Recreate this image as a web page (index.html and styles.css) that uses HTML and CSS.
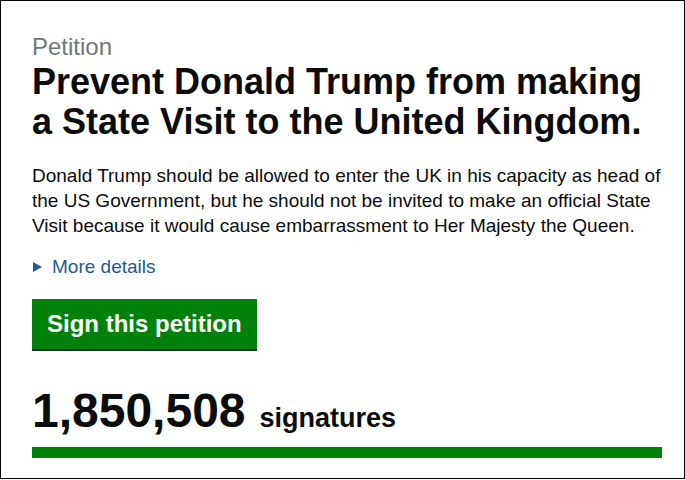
FILE: index.html
```html
<!DOCTYPE html>
<html lang="en">
<head>
<meta charset="utf-8">
<title>Petition</title>
<link rel="stylesheet" href="styles.css">
</head>
<body>
<div class="frame">
  <div class="content">
    <p class="kicker">Petition</p>
    <h1 class="title">Prevent Donald Trump from making a State Visit to the United Kingdom.</h1>
    <p class="body-text">Donald Trump should be allowed to enter the UK in his capacity as head of the US Government, but he should not be invited to make an official State Visit because it would cause embarrassment to Her Majesty the Queen.</p>
    <div class="details"><span class="arrow"></span><span class="details-link">More details</span></div>
    <div class="button-row"><span class="button">Sign this petition</span></div>
    <div class="count"><span class="count-number">1,850,508</span><span class="count-text">signatures</span></div>
    <div class="bar"></div>
  </div>
</div>
</body>
</html>
```

FILE: styles.css
```css
* { box-sizing: border-box; }
html, body { margin: 0; padding: 0; background: #fff; }
body { font-family: "Liberation Sans", Arial, sans-serif; color: #0b0c0c; }
.frame {
  width: 685px;
  height: 479px;
  border: 1px solid #000;
  padding: 31px 0 0 31px;
  overflow: hidden;
}
.content { width: 630px; }
.kicker {
  margin: 0;
  font-size: 24px;
  line-height: 30px;
  color: #6f777b;
}
.title {
  margin: 0;
  font-size: 36px;
  line-height: 40px;
  font-weight: 700;
}
.body-text {
  margin: 21px 0 0;
  font-size: 19px;
  line-height: 25px;
}
.details {
  margin-top: 16px;
  display: flex;
  align-items: center;
  gap: 10px;
  font-size: 19px;
  line-height: 25px;
}
.arrow {
  width: 0;
  height: 0;
  margin-left: 1px;
  border-left: 9px solid #1d5b8f;
  border-top: 5.5px solid transparent;
  border-bottom: 5.5px solid transparent;
}
.details-link { color: #1d5b8f; }
.button-row { margin-top: 20px; display: flex; }
.button {
  display: inline-block;
  background: #00820a;
  color: #fff;
  font-size: 24px;
  line-height: 30px;
  font-weight: 700;
  padding: 10px 15px;
  box-shadow: 0 2px 0 #003618;
}
.count {
  margin-top: 37px;
  display: flex;
  align-items: baseline;
  gap: 14px;
}
.count-number {
  font-size: 48px;
  line-height: 50px;
  font-weight: 700;
}
.count-text {
  font-size: 27px;
  font-weight: 700;
}
.bar {
  margin-top: 11px;
  height: 11px;
  background: #00820a;
}
```
